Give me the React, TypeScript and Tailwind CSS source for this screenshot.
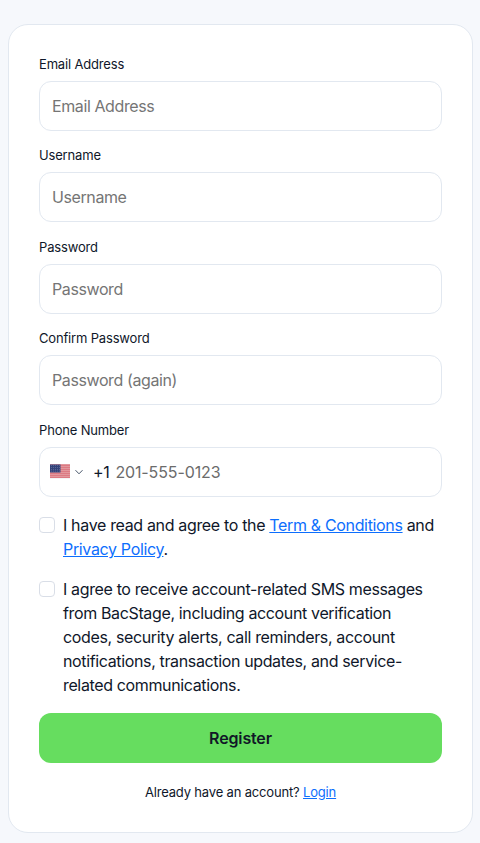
import React from "react";

function Field({ label, placeholder }: { label: string; placeholder: string }) {
  return (
    <div className="flex flex-col">
      <label className="text-[13px] leading-[19.5px] font-normal tracking-[-0.17px] text-[#0f172a] mb-[6.5px]">{label}</label>
      <input
        placeholder={placeholder}
        className="h-[50px] w-full rounded-[12px] border border-[#e2e8f0] bg-white px-[12px] text-[16px] tracking-[-0.4px] text-[#0f172a] placeholder:text-[#757575] outline-none"
      />
    </div>
  );
}

function Flag() {
  const stripes = [0, 2, 4, 6, 8, 10, 12];
  return (
    <svg width="20" height="15" viewBox="0 0 20 15" className="shrink-0">
      <rect width="20" height="15" fill="#f4f4f6" />
      {stripes.map((y) => (
        <rect key={y} x="0" y={y + 0.5} width="20" height="1.15" fill="#cf3a45" />
      ))}
      <rect width="10.5" height="8" y="0.5" fill="#33427a" />
      {[1.5, 3.5, 5.5, 7].map((y) =>
        [1.5, 3.5, 5.5, 7.5, 9.5].map((x) => <circle key={x + "-" + y} cx={x} cy={y} r="0.35" fill="#c9cde0" />)
      )}
    </svg>
  );
}

export default function App() {
  return (
    <div className="min-h-[843px] bg-[#f6f8fc] pl-[8px] pr-[7px] pt-[24px] font-['Inter',sans-serif] text-[#0f172a]">
      <div className="h-[809px] rounded-[20px] border border-[#e2e8f0] bg-white px-[30px] pt-[29.9px]">
        <div className="flex flex-col gap-[15.5px]">
          <Field label="Email Address" placeholder="Email Address" />
          <Field label="Username" placeholder="Username" />
          <Field label="Password" placeholder="Password" />
          <Field label="Confirm Password" placeholder="Password (again)" />
          <div className="flex flex-col">
            <label className="text-[13px] leading-[19.5px] tracking-[-0.17px] text-[#0f172a] mb-[6.5px]">Phone Number</label>
            <div className="flex h-[50px] items-center rounded-[12px] border border-[#e2e8f0] bg-white pl-[10px]">
              <Flag />
              <svg width="10" height="10" viewBox="0 0 10 10" className="ml-[4px] shrink-0" fill="none" stroke="#475569" strokeWidth="1">
                <path d="M1.5 3.2 5 6.8l3.5-3.6" />
              </svg>
              <span className="ml-[9px] text-[16px] tracking-[-0.36px] text-[#0f172a]">+1</span>
              <span className="ml-[6px] text-[16px] tracking-[-0.12px] text-[#6b6b6b]">201-555-0123</span>
            </div>
          </div>
        </div>
        <div className="mt-[16px] flex items-start gap-[8px] text-[16px] leading-[24px] tracking-[-0.34px]">
          <span className="mt-[4px] h-[16px] w-[16px] shrink-0 rounded-[4px] border border-[#d9dee7] bg-white" />
          <p>
            I have read and agree to the <a href="#" className="text-[#0d6efd] underline">Term &amp; Conditions</a> and{" "}
            <a href="#" className="text-[#0d6efd] underline">Privacy Policy</a>.
          </p>
        </div>
        <div className="mt-[16px] flex items-start gap-[8px] text-[16px] leading-[24px] tracking-[-0.36px]">
          <span className="mt-[4px] h-[16px] w-[16px] shrink-0 rounded-[4px] border border-[#d9dee7] bg-white" />
          <p>
            I agree to receive account-related SMS messages from BacStage, including account verification codes, security alerts, call reminders, account notifications, transaction updates, and service-related communications.
          </p>
        </div>
        <button className="mt-[16px] h-[50px] w-full rounded-[12px] bg-[#66dd5f] text-[16px] font-semibold tracking-[-0.15px] text-[#111827]">
          Register
        </button>
        <p className="mt-[20px] text-center text-[13px] leading-[19.5px] tracking-[-0.17px]">
          Already have an account? <a href="#" className="text-[#0d6efd] underline">Login</a>
        </p>
      </div>
    </div>
  );
}
